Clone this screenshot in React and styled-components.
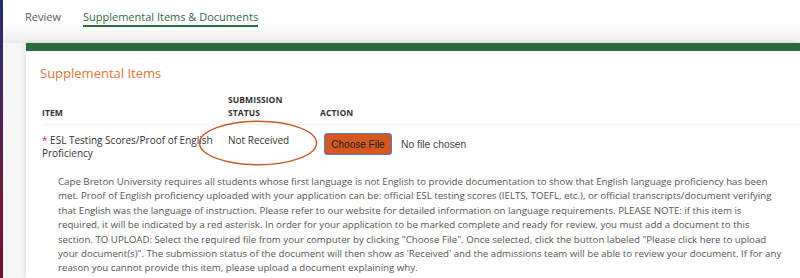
import React from 'react'
import styled, { createGlobalStyle } from 'styled-components'

const GlobalStyle = createGlobalStyle`
  html, body {
    margin: 0;
    padding: 0;
    background: #f6f6f6;
  }
  body {
    font-family: 'Open Sans', 'Liberation Sans', sans-serif;
    color: #444;
  }
`

const App = () => {
  return (
    <>
      <GlobalStyle />
      <Page>
        <SideStrip />
        <Main>
          <TabBar>
            <Tab>Review</Tab>
            <Tab active>Supplemental Items &amp; Documents</Tab>
          </TabBar>
          <Card>
            <Title>Supplemental Items</Title>
            <Table>
              <HeadRow>
                <HeadCell>Item</HeadCell>
                <HeadCell>
                  Submission
                  <br />
                  Status
                </HeadCell>
                <HeadCell>Action</HeadCell>
              </HeadRow>
              <ItemRow>
                <ItemName>
                  <Required>*</Required> ESL Testing Scores/Proof of English
                  Proficiency
                </ItemName>
                <StatusCell>
                  Not Received
                  <Circle viewBox='0 0 120 46'>
                    <ellipse
                      cx='60'
                      cy='23'
                      rx='58.5'
                      ry='21.8'
                      fill='none'
                      stroke='#c85a26'
                      strokeWidth='1.4'
                    />
                  </Circle>
                </StatusCell>
                <ActionCell>
                  <FileButton type='button'>Choose File</FileButton>
                  <FileName>No file chosen</FileName>
                </ActionCell>
              </ItemRow>
            </Table>
            <Description>
              Cape Breton University requires all students whose first language
              is not English to provide documentation to show that English
              language proficiency has been met. Proof of English proficiency
              uploaded with your application can be: official ESL testing
              scores (IELTS, TOEFL, etc.), or official transcripts/document
              verifying that English was the language of instruction. Please
              refer to our website for detailed information on language
              requirements. PLEASE NOTE: if this item is required, it will be
              indicated by a red asterisk. In order for your application to be
              marked complete and ready for review, you must add a document to
              this section. TO UPLOAD: Select the required file from your
              computer by clicking "Choose File". Once selected, click the
              button labeled "Please click here to upload your document(s)".
              The submission status of the document will then show as
              'Received' and the admissions team will be able to review your
              document. If for any reason you cannot provide this item, please
              upload a document explaining why.
            </Description>
          </Card>
        </Main>
      </Page>
    </>
  )
}
export default App

const Page = styled.div`
  display: flex;
  width: 800px;
  height: 278px;
  overflow: hidden;
`
const SideStrip = styled.div`
  width: 3px;
  flex-shrink: 0;
  background: linear-gradient(180deg, #262c6c 0%, #4a2354 40%, #6e1a30 75%, #6a1628 100%);
`
const Main = styled.div`
  flex: 1;
  display: flex;
  flex-direction: column;
  background: #f6f6f6;
`
const TabBar = styled.div`
  height: 43px;
  flex-shrink: 0;
  box-sizing: border-box;
  display: flex;
  align-items: flex-start;
  gap: 22px;
  padding: 9px 0 0 22px;
  background: linear-gradient(180deg, #ffffff 0%, #ffffff 55%, #ececec 100%);
`
const Tab = styled.div`
  font-size: 11px;
  line-height: 15px;
  padding-bottom: 1px;
  color: ${(props) => (props.active ? '#2e6a3e' : '#5a5a5a')};
  border-bottom: 2px solid
    ${(props) => (props.active ? '#2e6a3e' : 'transparent')};
`
const Card = styled.div`
  flex: 1;
  margin-left: 23px;
  background: #ffffff;
  border-top: 8px solid #2c6a3d;
  box-shadow: -2px 0 6px rgba(0, 0, 0, 0.08);
  padding: 13px 0 0 14px;
`
const Title = styled.h2`
  margin: 0;
  font-size: 13px;
  font-weight: 400;
  line-height: 18px;
  color: #e0743a;
`
const Table = styled.div`
  margin-top: 11px;
  padding-left: 2px;
`
const HeadRow = styled.div`
  display: grid;
  grid-template-columns: 186px 92px 1fr;
  align-items: end;
  padding-bottom: 5px;
  border-bottom: 1px solid #f0f0f0;
`
const HeadCell = styled.div`
  font-size: 8.5px;
  font-weight: 700;
  line-height: 13px;
  text-transform: uppercase;
  color: #333;
  letter-spacing: 0.1px;
`
const ItemRow = styled.div`
  display: grid;
  grid-template-columns: 186px 92px 1fr;
  align-items: start;
  padding-top: 9px;
`
const ItemName = styled.div`
  font-size: 10px;
  line-height: 12.5px;
  color: #333;
`
const Required = styled.span`
  color: #d9302c;
`
const StatusCell = styled.div`
  position: relative;
  font-size: 10px;
  line-height: 13px;
  color: #333;
`
const Circle = styled.svg`
  position: absolute;
  left: -30px;
  top: -14px;
  width: 120px;
  height: 46px;
  pointer-events: none;
`
const ActionCell = styled.div`
  display: flex;
  align-items: center;
  gap: 9px;
  margin-top: -1px;
  padding-left: 4px;
`
const FileButton = styled.button`
  width: 68px;
  height: 22px;
  padding: 0;
  font-family: 'Liberation Sans', Arial, sans-serif;
  font-size: 10px;
  color: #1d1d1d;
  background: #d4581f;
  border: 1.5px solid #4b7fd5;
  border-radius: 3px;
`
const FileName = styled.span`
  font-family: 'Liberation Sans', Arial, sans-serif;
  font-size: 10.3px;
  color: #444;
`
const Description = styled.p`
  margin: 16px 0 0 0;
  padding: 0 17px 0 18px;
  font-size: 9.7px;
  line-height: 14.4px;
  color: #555;
`
